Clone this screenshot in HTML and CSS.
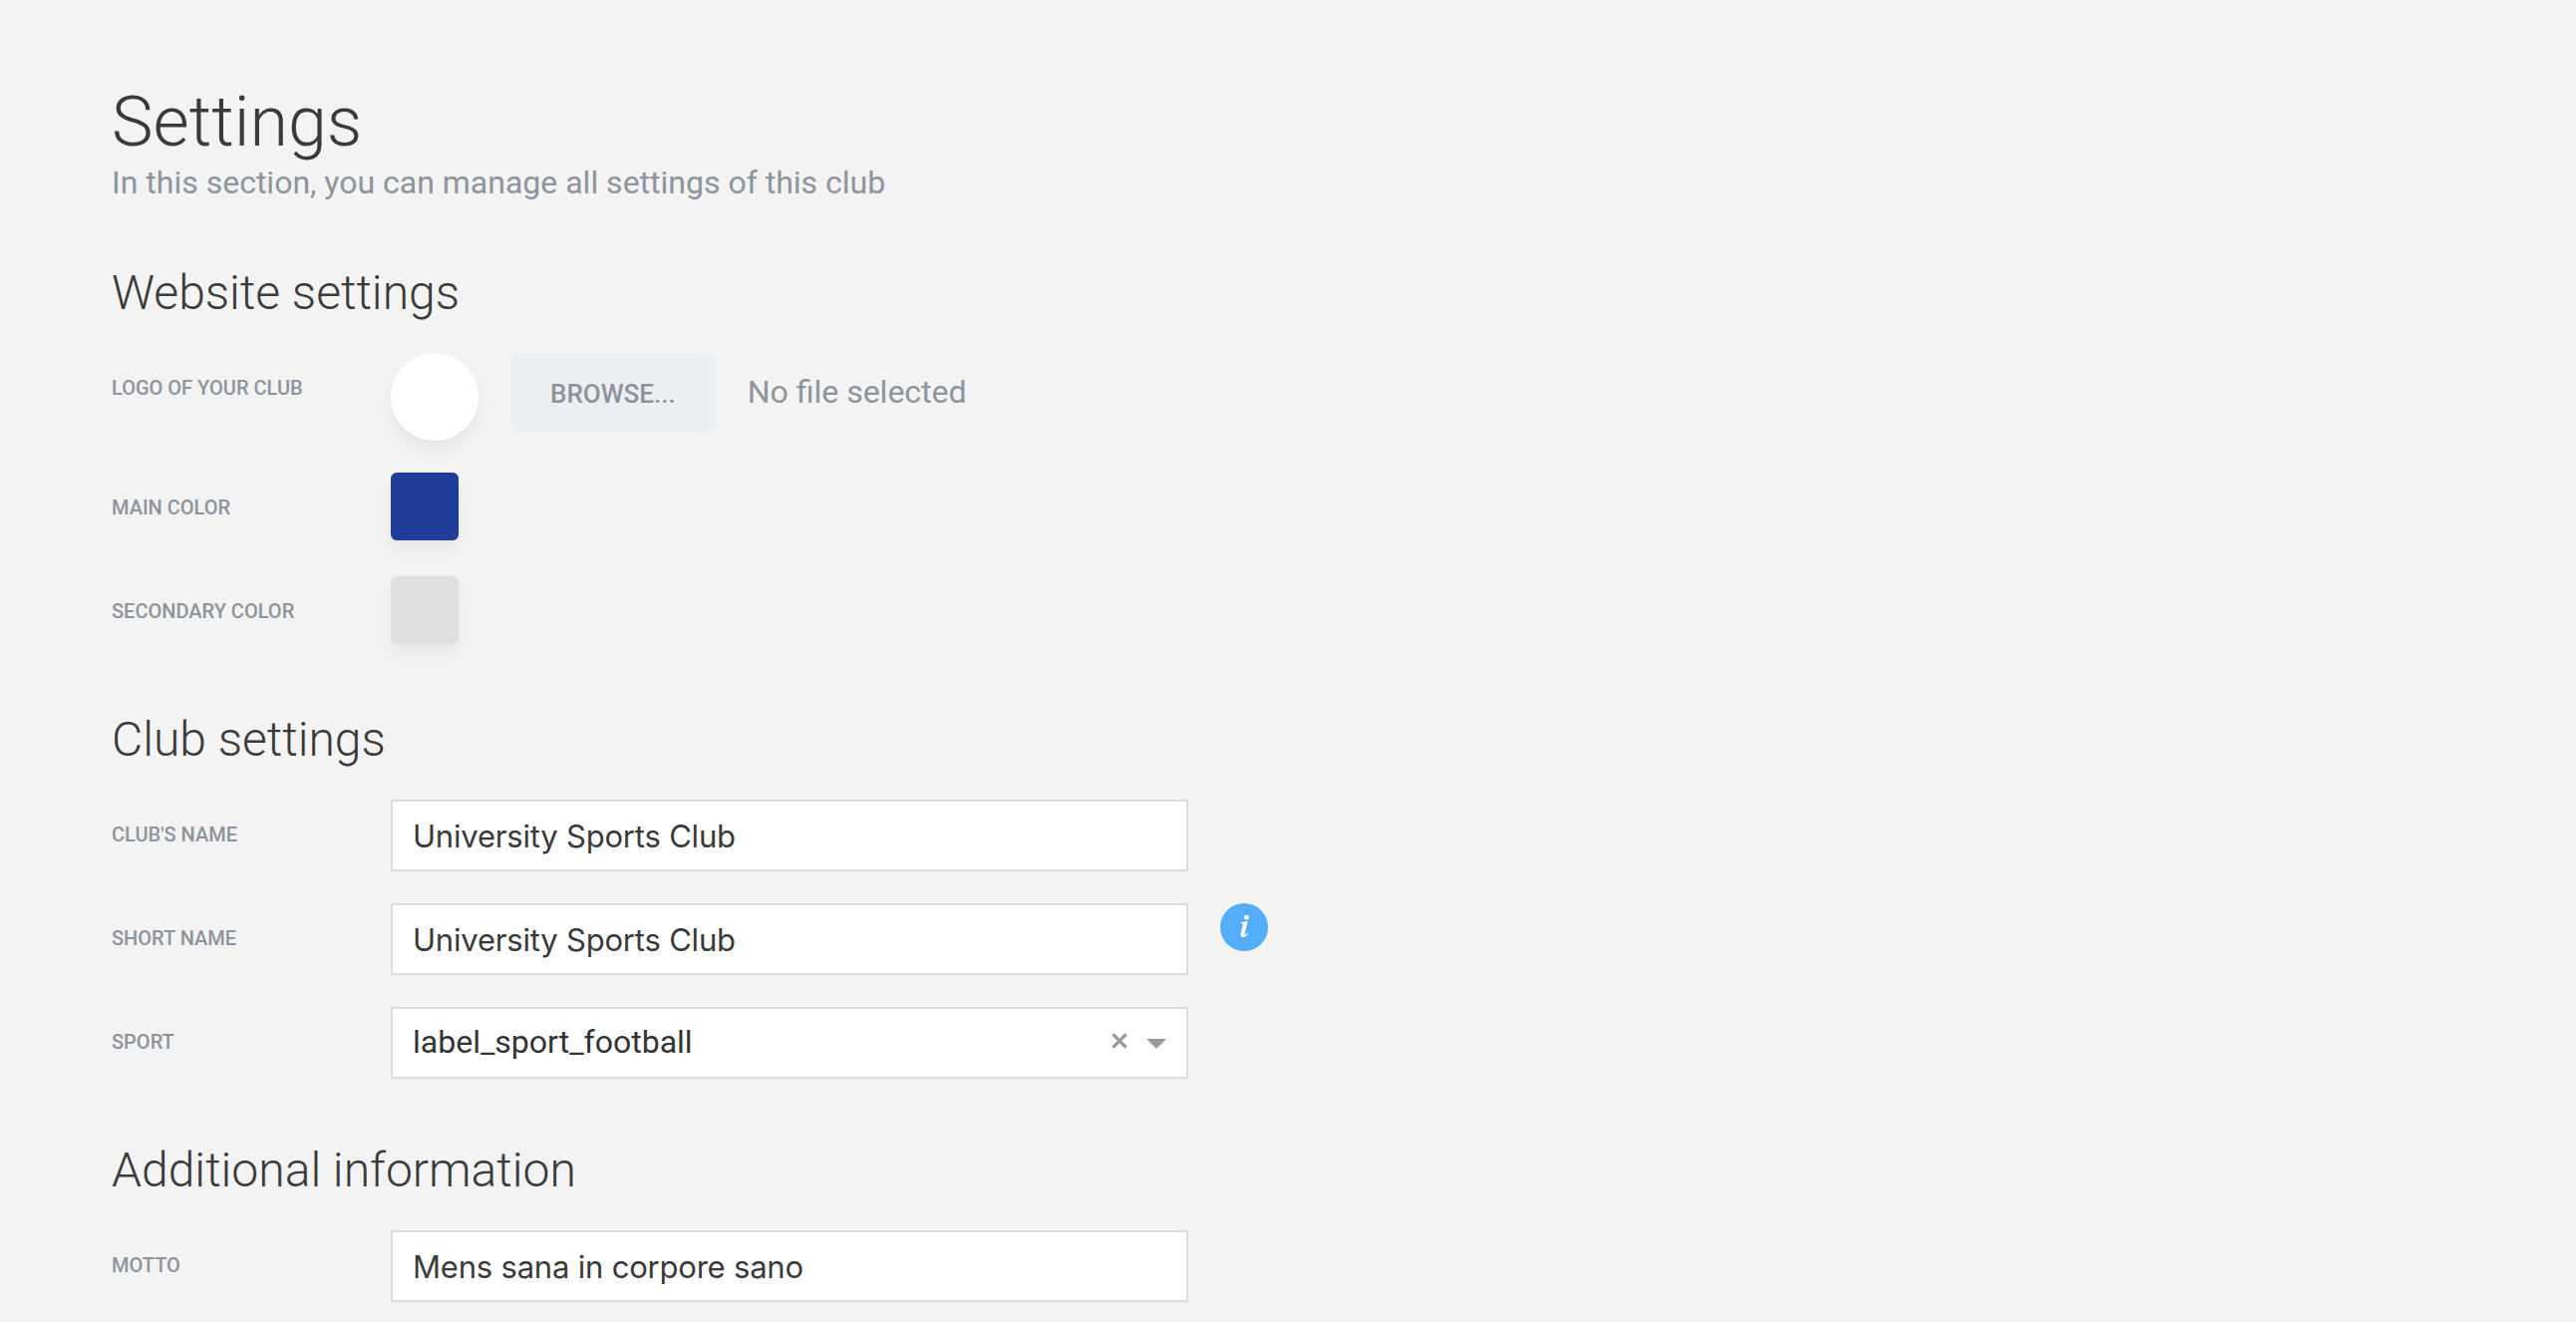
FILE: index.html
```
<!DOCTYPE html>
<html lang="en">
<head>
  <meta charset="utf-8">
  <title>Settings</title>
  <link rel="stylesheet" href="styles.css">
</head>
<body>
  <main class="page">
    <header class="page-header">
      <h1 class="page-title">Settings</h1>
      <p class="page-intro">In this section, you can manage all settings of this club</p>
    </header>

    <section class="section section-website">
      <h2 class="section-title">Website settings</h2>
      <div class="rows">
        <div class="row">
          <span class="label">Logo of your club</span>
          <div class="upload">
            <span class="logo-preview"></span>
            <button class="browse" type="button">Browse...</button>
            <span class="file-name">No file selected</span>
          </div>
        </div>
        <div class="row">
          <span class="label">Main color</span>
          <span class="swatch swatch-main"></span>
        </div>
        <div class="row">
          <span class="label">Secondary color</span>
          <span class="swatch swatch-secondary"></span>
        </div>
      </div>
    </section>

    <section class="section">
      <h2 class="section-title">Club settings</h2>
      <div class="rows">
        <div class="row">
          <label class="label" for="name">Club's name</label>
          <input class="field" id="name" type="text" value="University Sports Club">
        </div>
        <div class="row">
          <label class="label" for="short">Short name</label>
          <input class="field" id="short" type="text" value="University Sports Club">
          <svg class="info" viewBox="0 0 48 48" aria-label="Info">
            <circle cx="24" cy="24" r="24" fill="#54adf9"/>
            <circle cx="26.4" cy="14.2" r="2.4" fill="#fff"/>
            <path d="M20.6 19.2 L27.6 18 L24.6 30.2 C24.3 31.6 24.9 31.9 25.7 31.3 C26.4 30.8 26.9 30.2 27.4 29.5 L28.1 30 C26.8 32.5 25 34.1 22.9 34.1 C20.8 34.1 20 32.7 20.5 30.6 L22.7 21.8 C23.1 20.3 22.7 20.1 20.6 20.1 Z" fill="#fff"/>
          </svg>
        </div>
        <div class="row">
          <span class="label">Sport</span>
          <div class="select">
            <span class="select-value">label_sport_football</span>
            <svg class="select-clear" viewBox="0 0 16 16"><path d="M1.4 1.4 L14.6 14.6 M14.6 1.4 L1.4 14.6" stroke="#999" stroke-width="3.2"/></svg>
            <svg class="select-arrow" viewBox="0 0 20 10"><path d="M0 0 H20 L10 10 Z" fill="#999"/></svg>
          </div>
        </div>
      </div>
    </section>

    <section class="section">
      <h2 class="section-title">Additional information</h2>
      <div class="rows">
        <div class="row">
          <label class="label" for="motto">Motto</label>
          <input class="field" id="motto" type="text" value="Mens sana in corpore sano">
        </div>
      </div>
    </section>
  </main>
</body>
</html>
```
FILE: styles.css
```
* {
  box-sizing: border-box;
}

body {
  margin: 0;
  background: #f3f3f3;
  color: #3a3a3a;
  font: 400 32px Roboto, sans-serif;
}

.page {
  padding: 80px 112px 20px;
}

.page-title,
.page-intro,
.section-title {
  margin: 0;
}

.page-title {
  font-size: 70px;
  font-weight: 300;
  line-height: 84px;
}

.page-intro {
  color: #8d949d;
  line-height: 38px;
}

.section {
  margin-top: 64px;
}

.section-title {
  margin-bottom: 32px;
  font-size: 48px;
  font-weight: 300;
  line-height: 56px;
}

.rows {
  display: flex;
  flex-direction: column;
  gap: 32px;
}

.row {
  display: flex;
  align-items: flex-start;
  min-height: 72px;
}

.label {
  flex: none;
  width: 280px;
  color: #8d949d;
  font-size: 20px;
  font-weight: 500;
  line-height: 70px;
  text-transform: uppercase;
}

.upload {
  display: flex;
  align-items: flex-start;
  gap: 32px;
}

.logo-preview {
  width: 88px;
  height: 88px;
  border-radius: 50%;
  background: #fff;
  box-shadow: 0 10px 16px rgba(0, 0, 0, 0.05);
}

.browse {
  height: 80px;
  padding: 2px 40px 0;
  border: 0;
  border-radius: 10px;
  background: #ebeff4;
  color: #8e9399;
  font: 500 26px Roboto, sans-serif;
  text-transform: uppercase;
}

.file-name {
  color: #8d949d;
  line-height: 78px;
}

.swatch {
  width: 68px;
  height: 68px;
  border-radius: 6px;
  box-shadow: 0 10px 16px rgba(0, 0, 0, 0.05);
}

.swatch-main {
  background: #223c9b;
}

.swatch-secondary {
  background: #e0e0e0;
}

.field,
.select {
  width: 800px;
  height: 72px;
  border: 2px solid #d9dee5;
  border-radius: 0;
  background: #fff;
  padding: 0 20px;
}

.field {
  color: #3a3a3a;
  font: 400 31px Inter, sans-serif;
  letter-spacing: -0.2px;
}

.select {
  display: flex;
  align-items: center;
  color: #333;
}

.select-value {
  flex: 1;
  line-height: 66px;
  padding-bottom: 2px;
}

.select-clear {
  width: 16px;
  height: 16px;
  margin: 0 19px 4px 0;
}

.select-arrow {
  width: 20px;
  height: 10px;
  margin-top: 2px;
}

.info {
  flex: none;
  width: 48px;
  height: 48px;
  margin-left: 32px;
}
```
